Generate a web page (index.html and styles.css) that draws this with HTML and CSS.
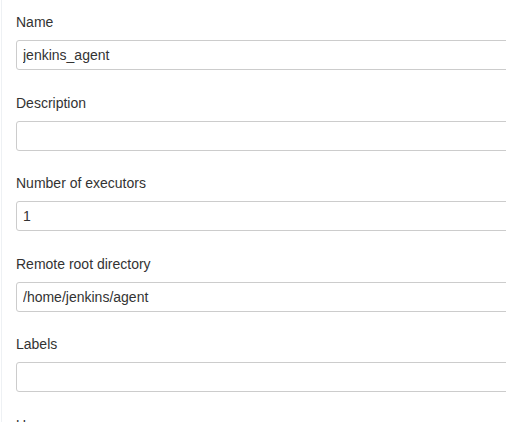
FILE: index.html
```html
<!DOCTYPE html>
<html>
<head>
<meta charset="utf-8">
<link rel="stylesheet" href="styles.css">
</head>
<body>
<div class="panel">
  <form class="form">
    <div class="field">
      <label class="label">Name</label>
      <input class="input" type="text" value="jenkins_agent">
    </div>
    <div class="field">
      <label class="label">Description</label>
      <input class="input" type="text" value="">
    </div>
    <div class="field">
      <label class="label">Number of executors</label>
      <input class="input" type="text" value="1">
    </div>
    <div class="field">
      <label class="label">Remote root directory</label>
      <input class="input" type="text" value="/home/jenkins/agent">
    </div>
    <div class="field">
      <label class="label">Labels</label>
      <input class="input" type="text" value="">
    </div>
    <div class="field">
      <label class="label">Usage</label>
      <input class="input" type="text" value="">
    </div>
  </form>
</div>
</body>
</html>
```

FILE: styles.css
```css
html, body {
  margin: 0;
  padding: 0;
  background: #fff;
  overflow: hidden;
  height: 100%;
}
body {
  font-family: "Liberation Sans", Arial, Helvetica, sans-serif;
  color: #333;
}
.panel {
  margin-left: 1px;
  border-left: 1px solid #eef1f4;
  height: 100%;
  overflow: hidden;
}
.form {
  padding: 12px 0 0 14px;
  margin: 0;
}
.field {
  display: flex;
  flex-direction: column;
  align-items: flex-start;
  margin-bottom: 22.5px;
}
.label {
  display: block;
  font-size: 14px;
  line-height: 20px;
  color: #333;
  margin-bottom: 8px;
}
.input {
  box-sizing: border-box;
  width: 620px;
  height: 30px;
  margin: 0;
  padding: 0 6px;
  border: 1px solid #ccc;
  border-radius: 3px;
  font-family: "Liberation Sans", Arial, Helvetica, sans-serif;
  font-size: 14px;
  color: #333;
  background: #fff;
  outline: none;
  flex: none;
}
```
